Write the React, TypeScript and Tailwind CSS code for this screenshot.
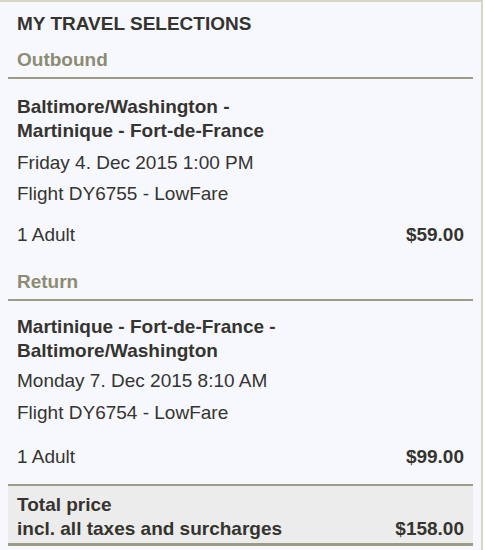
import React from 'react';

interface Leg {
  label: string;
  route: string[];
  date: string;
  flight: string;
  pax: string;
  price: string;
  gaps: string[]; // label, route, date, flight, pax
}

const legs: Leg[] = [
  {
    label: 'Outbound',
    route: ['Baltimore/Washington -', 'Martinique - Fort-de-France'],
    date: 'Friday 4. Dec 2015 1:00 PM',
    flight: 'Flight DY6755 - LowFare',
    pax: '1 Adult',
    price: '$59.00',
    gaps: ['mt-[12px]', 'mt-[16px]', 'mt-[8px]', 'mt-[7px]', 'mt-[17px]'],
  },
  {
    label: 'Return',
    route: ['Martinique - Fort-de-France -', 'Baltimore/Washington'],
    date: 'Monday 7. Dec 2015 8:10 AM',
    flight: 'Flight DY6754 - LowFare',
    pax: '1 Adult',
    price: '$99.00',
    gaps: ['mt-[23px]', 'mt-[14px]', 'mt-[6px]', 'mt-[8px]', 'mt-[20px]'],
  },
];

const LegBlock: React.FC<{ leg: Leg }> = ({ leg }) => (
  <div>
    <div className={`${leg.gaps[0]} px-[9px] pb-[5px] border-b-2 border-[#9c9b86] font-bold text-[#8d8c72]`}>
      {leg.label}
    </div>
    <div className="px-[9px]">
      <div className={`${leg.gaps[1]} font-bold`}>
        {leg.route.map((r) => (
          <div key={r}>{r}</div>
        ))}
      </div>
      <div className={leg.gaps[2]}>{leg.date}</div>
      <div className={leg.gaps[3]}>{leg.flight}</div>
      <div className={`${leg.gaps[4]} flex justify-between`}>
        <span>{leg.pax}</span>
        <span className="font-bold">{leg.price}</span>
      </div>
    </div>
  </div>
);

export default function App() {
  return (
    <div className="bg-white min-h-[550px] font-['Liberation_Sans',Arial,sans-serif]">
      <div className="w-[483px] border-t-2 border-r-2 border-[#d6d6c6] bg-[#f7f8fe] text-[19px] leading-6 text-[#35342f] px-[8px]">
        <div className="pt-[10px] px-[9px] font-bold">MY TRAVEL SELECTIONS</div>
        {legs.map((leg) => (
          <LegBlock key={leg.label} leg={leg} />
        ))}
        <div className="mt-[15px] border-t-2 border-b-[3px] border-b-double border-[#9c9b86] bg-[#ececec] px-[9px] pt-[7px] pb-[2px] font-bold">
          <div>Total price</div>
          <div className="flex justify-between">
            <span>incl. all taxes and surcharges</span>
            <span>$158.00</span>
          </div>
        </div>
        <div className="h-[20px]" />
      </div>
    </div>
  );
}
